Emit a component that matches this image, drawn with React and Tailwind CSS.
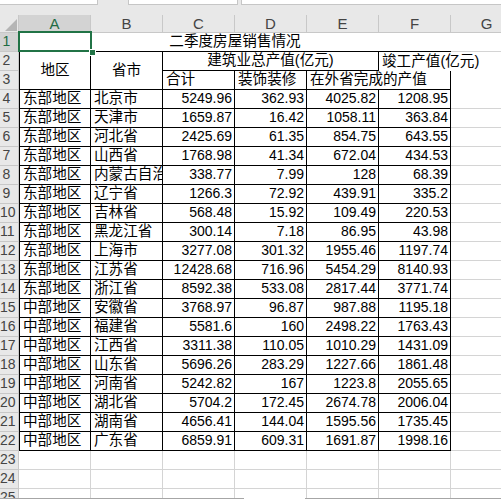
const rows = [
  ['东部地区', '北京市', '5249.96', '362.93', '4025.82', '1208.95'],
  ['东部地区', '天津市', '1659.87', '16.42', '1058.11', '363.84'],
  ['东部地区', '河北省', '2425.69', '61.35', '854.75', '643.55'],
  ['东部地区', '山西省', '1768.98', '41.34', '672.04', '434.53'],
  ['东部地区', '内蒙古自治区', '338.77', '7.99', '128', '68.39'],
  ['东部地区', '辽宁省', '1266.3', '72.92', '439.91', '335.2'],
  ['东部地区', '吉林省', '568.48', '15.92', '109.49', '220.53'],
  ['东部地区', '黑龙江省', '300.14', '7.18', '86.95', '43.98'],
  ['东部地区', '上海市', '3277.08', '301.32', '1955.46', '1197.74'],
  ['东部地区', '江苏省', '12428.68', '716.96', '5454.29', '8140.93'],
  ['东部地区', '浙江省', '8592.38', '533.08', '2817.44', '3771.74'],
  ['中部地区', '安徽省', '3768.97', '96.87', '987.88', '1195.18'],
  ['中部地区', '福建省', '5581.6', '160', '2498.22', '1763.43'],
  ['中部地区', '江西省', '3311.38', '110.05', '1010.29', '1431.09'],
  ['中部地区', '山东省', '5696.26', '283.29', '1227.66', '1861.48'],
  ['中部地区', '河南省', '5242.82', '167', '1223.8', '2055.65'],
  ['中部地区', '湖北省', '5704.2', '172.45', '2674.78', '2006.04'],
  ['中部地区', '湖南省', '4656.41', '144.04', '1595.56', '1735.45'],
  ['中部地区', '广东省', '6859.91', '609.31', '1691.87', '1998.16'],
]

const cols = ['A', 'B', 'C', 'D', 'E', 'F', 'G']

function RowHead({ n, active }) {
  return (
    <div className={`h-[19px] flex items-end pb-[1px] border-r border-b border-[#c8c8c8] text-[14px] leading-[17px] ${active ? 'bg-[#d3d3d3] text-[#1f6b43]' : 'bg-[#e8e8e8] text-[#444]'}`}>
      <span className="w-[13px] text-center whitespace-nowrap">{n}</span>
    </div>
  )
}

export default function App() {
  return (
    <div
      className="w-[501px] h-[500px] overflow-hidden bg-white flex flex-col text-black"
      style={{ fontFamily: '"Liberation Sans", "Noto Sans CJK SC", sans-serif' }}
    >
      {/* formula bar remains */}
      <div className="h-[15px] shrink-0 bg-[#e8e8e8] flex items-start">
        <div className="w-[98px] h-[5px] bg-white border-r border-b border-[#c6c6c6]" />
        <div className="w-[30px]" />
        <div className="w-[110px] h-[5px] bg-white border-x border-b border-[#c6c6c6]" />
        <div className="w-[3px]" />
        <div className="flex-1 h-[5px] bg-white border-l border-b border-[#c6c6c6]" />
      </div>

      <div className="h-[483px] overflow-hidden shrink-0">
        <div className="relative grid grid-cols-[19px_72px_72px_72px_72px_72px_72px_72px] w-[523px] text-[14px] leading-[17px]">
          {/* column headers */}
          <div className="h-[18px] bg-[#e8e8e8] border-r border-b border-[#c8c8c8] flex items-end justify-end p-[1px]">
            <svg width="12" height="12" viewBox="0 0 12 12"><polygon points="12,0 12,12 0,12" fill="#b5b5b5" /></svg>
          </div>
          {cols.map((c, i) => (
            <div
              key={c}
              className={`h-[18px] border-r border-b border-[#c8c8c8] flex items-center justify-center text-[15px] ${i === 0 ? 'bg-[#d3d3d3] text-[#1f6b43]' : 'bg-[#e8e8e8] text-[#444]'}`}
            >
              {c}
            </div>
          ))}

          {/* row 1 */}
          <RowHead n={1} active />
          <div className="col-span-6 h-[19px] border-b border-black flex items-end justify-center pb-[1px] relative text-[14.6px]">
            二季度房屋销售情况
            <div className="absolute left-[-1px] top-[-2px] w-[74px] h-[21px] border-2 border-[#217346]" />
            <div className="absolute left-[70px] top-[16px] w-[7px] h-[7px] bg-[#217346] border border-white" />
          </div>
          <div className="h-[19px] border-r border-b border-[#d4d4d4]" />

          {/* rows 2-3 */}
          <RowHead n={2} />
          <div className="row-span-2 border-l border-r border-b border-black flex items-center justify-center text-[14.6px]">地区</div>
          <div className="row-span-2 border-r border-b border-black flex items-center justify-center text-[14.6px]">省市</div>
          <div className="col-span-3 h-[19px] border-r border-b border-black flex items-end justify-center pb-[1px] text-[14.6px]">建筑业总产值(亿元)</div>
          <div className="h-[19px] flex items-end pb-[1px] pl-[3px] whitespace-nowrap relative z-10 text-[14.6px]">竣工产值(亿元)</div>
          <div className="row-span-2" />
          <RowHead n={3} />
          <div className="h-[19px] border-r border-b border-black flex items-end pb-[1px] pl-[3px] text-[14.6px]">合计</div>
          <div className="h-[19px] border-r border-b border-black flex items-end pb-[1px] pl-[3px] text-[14.6px]">装饰装修</div>
          <div className="col-span-2 h-[19px] border-r border-b border-black flex items-end pb-[1px] pl-[3px] text-[14.6px]">在外省完成的产值</div>

          {/* data */}
          {rows.map((r, i) => (
            <div key={i} className="contents">
              <RowHead n={i + 4} />
              <div className="h-[19px] border-l border-r border-b border-black flex items-end pb-[1px] pl-[3px] whitespace-nowrap overflow-hidden text-[14.6px]">{r[0]}</div>
              <div className="h-[19px] border-r border-b border-black flex items-end pb-[1px] pl-[3px] whitespace-nowrap overflow-hidden text-[14.6px]">{r[1]}</div>
              {r.slice(2).map((v, j) => (
                <div key={j} className="h-[19px] border-r border-b border-black flex items-end justify-end pb-[1px] pr-[2px]">{v}</div>
              ))}
              <div className="h-[19px] border-r border-b border-[#d4d4d4]" />
            </div>
          ))}

          {/* empty rows */}
          {[23, 24, 25].map(n => (
            <div key={n} className="contents">
              <RowHead n={n} />
              {cols.map(c => (
                <div key={c} className="h-[19px] border-r border-b border-[#d4d4d4]" />
              ))}
            </div>
          ))}
        </div>
      </div>

      {/* scrollbar edge */}
      <div className="h-[2px] flex">
        <div className="w-[244px] border-t border-[#a6a6a6]" />
        <div className="w-[61px]" />
        <div className="flex-1 border-t border-[#a6a6a6]" />
      </div>
    </div>
  )
}
